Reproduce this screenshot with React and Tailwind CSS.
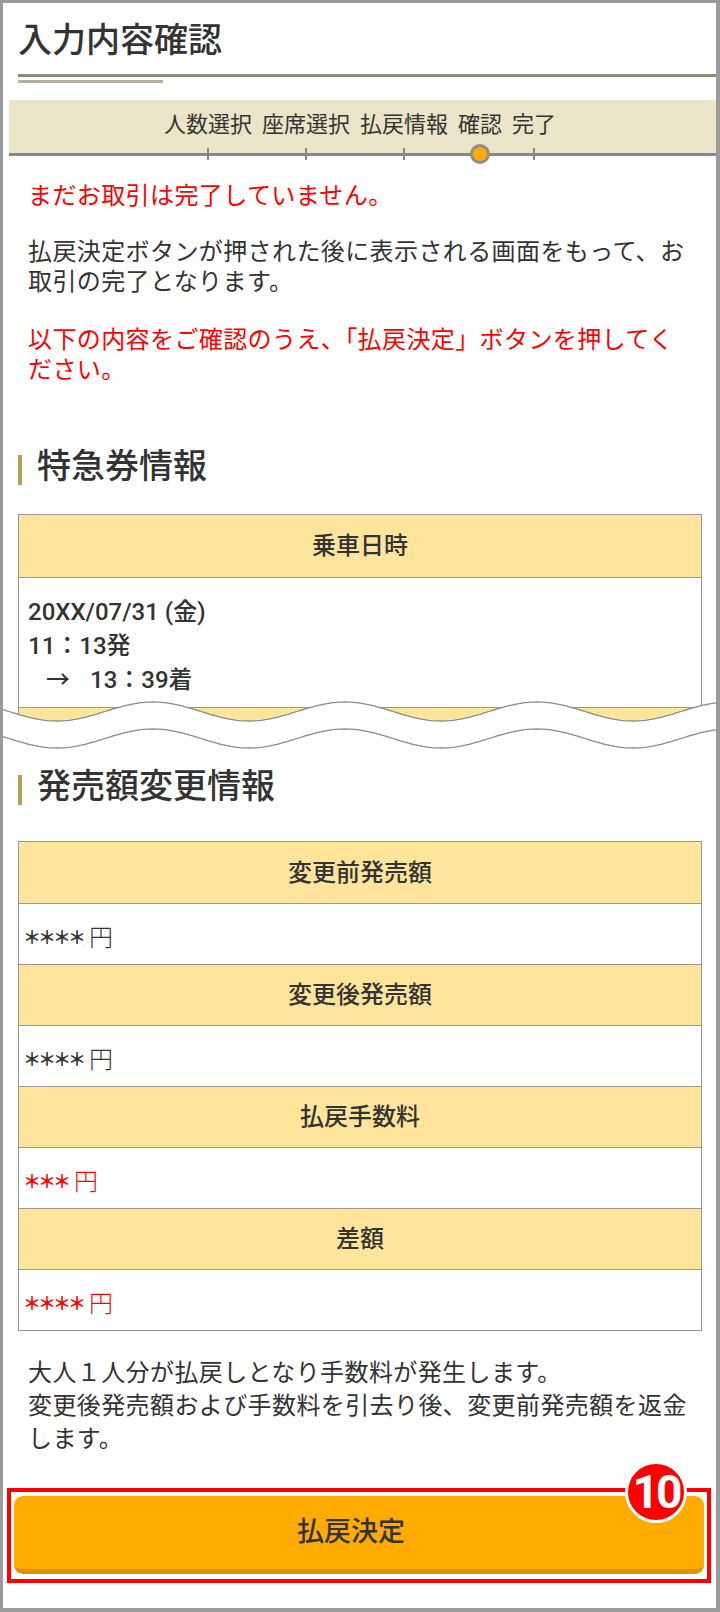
import React from 'react';

const steps = ['人数選択', '座席選択', '払戻情報', '確認', '完了'];
const current = 3;

const amountRows = [
  { label: '変更前発売額', value: '＊＊＊＊', red: false },
  { label: '変更後発売額', value: '＊＊＊＊', red: false },
  { label: '払戻手数料', value: '＊＊＊', red: true },
  { label: '差額', value: '＊＊＊＊', red: true },
];

// wave line across the page, page x offset 3 (inside the border)
function wave(c, amp) {
  const pts = [];
  for (let x = 0; x <= 714; x += 3) {
    const y = c - amp * Math.cos((2 * Math.PI * (x + 3 - 153)) / 192);
    pts.push([x, y.toFixed(2)]);
  }
  return pts;
}

function TornEdge() {
  const top = wave(16.5, 9.5);
  const bottom = wave(43.5, 9.5);
  const line = (pts) => 'M' + pts.map((p) => p.join(',')).join(' L');
  const fill = line(top) + ' L714,64 L0,64 Z';
  return (
    <svg className="absolute left-0 top-[692px]" width="714" height="64" viewBox="0 0 714 64">
      <path d={fill} fill="#fff" />
      <path d={line(top)} fill="none" stroke="#8a8a8a" strokeWidth="1.3" />
      <path d={line(bottom)} fill="none" stroke="#8a8a8a" strokeWidth="1.3" />
    </svg>
  );
}

function SectionHeading({ children }) {
  return (
    <div className="flex items-start gap-[15px] pl-[15px]">
      <div className="mt-[11px] w-[4px] h-[30px] bg-[#b5a04c]" />
      <h2 className="text-[34px] leading-[44px] font-medium text-[#333]">{children}</h2>
    </div>
  );
}

export default function App() {
  return (
    <div className="relative w-[720px] h-[1612px] bg-white border-[3px] border-r-[4px] border-b-[4px] border-[#9b9b9b] overflow-hidden font-['Roboto','Noto_Sans_CJK_JP',sans-serif] text-[#333]">
      {/* title */}
      <div className="pl-[15px] pt-[15px]">
        <h1 className="text-[34px] leading-[44px] font-medium">入力内容確認</h1>
      </div>
      <div className="mt-[12px] ml-[15px] h-[3px] bg-[#8e8a74]" />
      <div className="mt-[3px] ml-[15px] w-[145px] h-[3px] bg-[#b3af9c]" />

      {/* step bar */}
      <div className="mt-[17px] ml-[6px] bg-[#ebe4c9] pt-[10px] pb-[13px] pr-[5px] border-b-[3px] border-[#888]">
        <div className="flex justify-center gap-[10px]">
          {steps.map((s, i) => (
            <div key={s} className="relative text-[22px] leading-[30px]">
              {s}
              {i === current ? (
                <div className="absolute left-1/2 top-[34px] -translate-x-1/2 w-[20px] h-[20px] rounded-full bg-[#ffab00] border-[3px] border-[#8c8c8c]" />
              ) : (
                <div className="absolute left-1/2 top-[38px] -translate-x-1/2 w-[2px] h-[12px] bg-[#888]" />
              )}
            </div>
          ))}
        </div>
      </div>

      {/* messages */}
      <div className="pl-[25px] pr-[17px] text-[24px] leading-[30px] tracking-[0.4px]">
        <p className="mt-[25px] text-[#f00]">まだお取引は完了していません。</p>
        <p className="mt-[26px]">
          払戻決定ボタンが押された後に表示される画面をもって、お<br />取引の完了となります。
        </p>
        <p className="mt-[28px] text-[#f00]">
          以下の内容をご確認のうえ、「払戻決定」ボタンを押してく<br />ださい。
        </p>
      </div>

      {/* ticket info */}
      <div className="mt-[59px]">
        <SectionHeading>特急券情報</SectionHeading>
      </div>
      <div className="mt-[26px] ml-[15px] mr-[14px] border border-[#999]">
        <div className="h-[62px] bg-[#ffe49b] flex items-center justify-center text-[24px] font-medium">乗車日時</div>
        <div className="border-t border-[#999] h-[130px] pt-[17px] pl-[9px] text-[24px] leading-[34px] font-medium">
          <div>20XX/07/31 (金)</div>
          <div>11：13発</div>
          <div>
            <span className="pl-[18px]">→</span>
            <span className="ml-[20px]">13：39着</span>
          </div>
        </div>
        <div className="border-t border-[#999] h-[30px] bg-[#ffe49b]" />
      </div>

      <TornEdge />

      {/* amount info */}
      <div className="mt-[26px]">
        <SectionHeading>発売額変更情報</SectionHeading>
      </div>
      <div className="mt-[33px] ml-[15px] mr-[14px] border border-[#999]">
        {amountRows.map((r, i) => (
          <div key={r.label}>
            <div className={`h-[61px] bg-[#ffe49b] flex items-center justify-center text-[24px] font-medium ${i > 0 ? 'border-t border-[#999]' : ''}`}>
              {r.label}
            </div>
            <div className={`h-[61px] border-t border-[#999] flex items-center pl-[4px] pt-[4px] font-['Noto_Sans_CJK_JP',sans-serif] ${r.red ? 'text-[#f00]' : 'text-[#333]'}`}>
              <span className="text-[18px] font-semibold tracking-[-3px]">{r.value}</span>
              <span className="ml-[6px] text-[24px] font-light">円</span>
            </div>
          </div>
        ))}
      </div>

      {/* notes */}
      <div className="mt-[26px] pl-[25px] pr-[17px] text-[24px] leading-[33px] tracking-[0.4px]">
        <p>大人１人分が払戻しとなり手数料が発生します。</p>
        <p>変更後発売額および手数料を引去り後、変更前発売額を返金<br />します。</p>
      </div>

      {/* submit */}
      <div className="relative mt-[32px] ml-[4px] mr-[5px] border-[4px] border-[#f00] px-[3px] pt-[4px] pb-[5px]">
        <button className="w-full h-[78px] rounded-[9px] bg-[#ffab00] border-b-[5px] border-[#dc9300] pr-[16px] text-[27px] font-medium text-[#333] flex items-center justify-center">
          払戻決定
        </button>
        <div className="absolute right-[20px] top-[-31px] w-[62px] h-[62px] rounded-full bg-[#f00] border-[3px] border-white flex items-center justify-center text-white text-[46px] leading-none font-bold tracking-[-3px] font-['Roboto',sans-serif]">
          10
        </div>
      </div>
    </div>
  );
}
